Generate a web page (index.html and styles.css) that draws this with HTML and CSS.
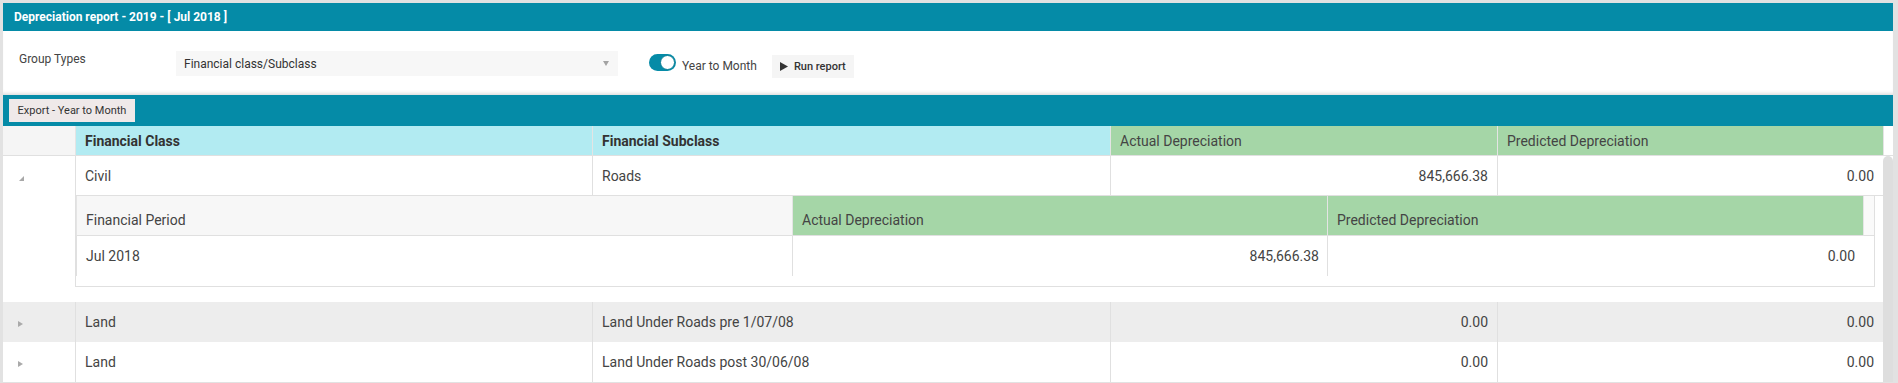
FILE: index.html
```html
<!DOCTYPE html>
<html lang="en">
<head>
    <meta charset="UTF-8">
    <meta name="viewport" content="width=device-width, initial-scale=1.0">
    <title>Depreciation report</title>
    <link rel="stylesheet" href="styles.css">
</head>
<body>

    <div class="panel">
        <div class="titlebar">Depreciation report - 2019 - [ Jul 2018 ]</div>

        <div class="filters">
            <div class="filter-label">Group Types</div>
            <div class="select">
                <span>Financial class/Subclass</span>
                <span class="caret"></span>
            </div>
            <span class="switch"></span>
            <span class="switch-label">Year to Month</span>
            <div class="run-btn">
                <svg width="8" height="9" viewBox="0 0 8 9"><path d="M0 0 L8 4.5 L0 9 Z" fill="#333"/></svg>
                <span>Run report</span>
            </div>
        </div>

        <div class="toolbar">
            <button class="export-btn">Export - Year to Month</button>
        </div>

        <div class="grid">
            <table class="grid-table">
                <colgroup>
                    <col class="col-exp">
                    <col class="col-class">
                    <col class="col-sub">
                    <col class="col-act">
                    <col class="col-pred">
                </colgroup>
                <thead>
                    <tr>
                        <th class="h-blank"></th>
                        <th class="h-cyan">Financial Class</th>
                        <th class="h-cyan">Financial Subclass</th>
                        <th class="h-green">Actual Depreciation</th>
                        <th class="h-green">Predicted Depreciation</th>
                    </tr>
                </thead>
                <tbody>
                    <tr class="expanded">
                        <td class="exp"><span class="arrow-down"></span></td>
                        <td>Civil</td>
                        <td>Roads</td>
                        <td class="num">845,666.38</td>
                        <td class="num">0.00</td>
                    </tr>
                    <tr class="detail">
                        <td class="exp"></td>
                        <td colspan="4" class="detail-cell">
                            <div class="inner">
                                <div class="inner-head">
                                    <table class="inner-table">
                                        <colgroup>
                                            <col class="icol-period">
                                            <col class="icol-act">
                                            <col class="icol-pred">
                                        </colgroup>
                                        <tr>
                                            <th class="ih-gray">Financial Period</th>
                                            <th class="ih-green">Actual Depreciation</th>
                                            <th class="ih-green">Predicted Depreciation</th>
                                        </tr>
                                    </table>
                                    <div class="inner-pad"></div>
                                </div>
                                <div class="inner-body">
                                    <table class="inner-table">
                                        <colgroup>
                                            <col class="icol-period">
                                            <col class="icol-act">
                                            <col class="icol-pred">
                                        </colgroup>
                                        <tr>
                                            <td>Jul 2018</td>
                                            <td class="num">845,666.38</td>
                                            <td class="num">0.00</td>
                                        </tr>
                                    </table>
                                </div>
                            </div>
                        </td>
                    </tr>
                    <tr class="alt">
                        <td class="exp"><span class="arrow-right"></span></td>
                        <td>Land</td>
                        <td>Land Under Roads pre 1/07/08</td>
                        <td class="num">0.00</td>
                        <td class="num">0.00</td>
                    </tr>
                    <tr>
                        <td class="exp"><span class="arrow-right"></span></td>
                        <td>Land</td>
                        <td>Land Under Roads post 30/06/08</td>
                        <td class="num">0.00</td>
                        <td class="num">0.00</td>
                    </tr>
                </tbody>
            </table>
            <div class="grid-side">
                <div class="head-pad"></div>
                <div class="scroll-thumb"></div>
            </div>
        </div>
    </div>

</body>
</html>
```

FILE: styles.css
```css
body {
    margin: 0;
    background-color: #e2e2e2;
    font-family: Roboto, "Noto Sans", Arial, sans-serif;
    color: #444;
    overflow: hidden;
}
.panel {
    margin: 3px 5px 0 3px;
    background: #fff;
}
.titlebar {
    height: 28px;
    line-height: 28px;
    background: #058ba7;
    color: #fff;
    font-size: 12px;
    font-weight: bold;
    padding-left: 11px;
}
.filters {
    height: 64px;
    box-sizing: border-box;
    display: flex;
    align-items: flex-start;
    padding: 20px 0 0 16px;
    font-size: 12px;
    box-shadow: inset 0 -4px 4px -3px rgba(0, 0, 0, 0.18);
}
.filter-label {
    width: 157px;
    margin-top: 1px;
    line-height: 14px;
}
.select {
    width: 442px;
    height: 25px;
    box-sizing: border-box;
    background: #f7f7f7;
    color: #333;
    display: flex;
    align-items: center;
    justify-content: space-between;
    padding: 0 9px 0 8px;
}
.caret {
    border-left: 3px solid transparent;
    border-right: 3px solid transparent;
    border-top: 5px solid #a3a3a3;
}
.switch {
    position: relative;
    width: 27px;
    height: 17px;
    border-radius: 9px;
    background: #058ba7;
    margin: 3px 6px 0 31px;
}
.switch::after {
    content: "";
    position: absolute;
    right: 1px;
    top: 1px;
    width: 15px;
    height: 15px;
    box-sizing: border-box;
    border-radius: 50%;
    background: #fff;
    border: 1px solid #0a7d95;
}
.switch-label {
    margin-top: 6px;
    line-height: 19px;
}
.run-btn {
    margin: 4px 0 0 15px;
    height: 23px;
    background: #f5f5f5;
    color: #333;
    font-size: 11px;
    font-weight: 500;
    display: flex;
    align-items: center;
    gap: 6px;
    padding: 0 8px;
}
.toolbar {
    height: 31px;
    box-sizing: border-box;
    background: #058ba7;
    padding: 4px 6px;
}
.export-btn {
    height: 23px;
    width: 126px;
    border: none;
    padding: 0;
    background: #efe9e9;
    color: #333;
    font-family: inherit;
    font-size: 11px;
}
.grid {
    display: flex;
}
.grid-table {
    width: 1880px;
    table-layout: fixed;
    border-collapse: separate;
    border-spacing: 0;
    font-size: 14px;
}
.col-exp { width: 72px; }
.col-class { width: 517px; }
.col-sub { width: 518px; }
.col-act { width: 387px; }
.col-pred { width: 386px; }
.grid-table th {
    height: 30px;
    box-sizing: border-box;
    text-align: left;
    padding: 0 9px;
    border-left: 1px solid #e4e4e4;
    border-bottom: 1px solid #e0e0e0;
    color: #333;
}
.grid-table th.h-blank {
    background: #f5f5f5;
    border-left: none;
}
.h-cyan {
    background: #b2ebf2;
    font-weight: bold;
}
.grid-table th.h-green {
    background: #a5d6a7;
    font-weight: normal;
    color: #444;
}
.grid-table td {
    height: 40px;
    box-sizing: border-box;
    padding: 0 9px;
    border-left: 1px solid #e0e0e0;
    white-space: nowrap;
}
.grid-table td.exp {
    border-left: none;
    padding-left: 15px;
}
.grid-table .num {
    text-align: right;
}
.expanded td {
    border-bottom: 1px solid #e0e0e0;
}
.expanded td.exp {
    border-bottom: none;
}
.alt td {
    background: #ededed;
}
.arrow-down {
    display: inline-block;
    border-left: 5px solid transparent;
    border-bottom: 5px solid #a8a8a8;
    margin-left: 1px;
}
.arrow-right {
    display: inline-block;
    border-top: 3px solid transparent;
    border-bottom: 3px solid transparent;
    border-left: 5px solid #aaa;
}
.grid-table td.detail-cell {
    height: auto;
    padding: 0 8px 15px 0;
    border-left: none;
}
.inner {
    border: 1px solid #e0e0e0;
    border-top: none;
}
.inner-head {
    display: flex;
}
.inner-table {
    width: 1787px;
    table-layout: fixed;
    border-collapse: separate;
    border-spacing: 0;
}
.icol-period { width: 716px; }
.icol-act { width: 535px; }
.icol-pred { width: 536px; }
.inner-table th {
    height: 40px;
    box-sizing: border-box;
    text-align: left;
    vertical-align: bottom;
    padding: 0 8px 7px 9px;
    font-weight: normal;
    color: #444;
    border-bottom: 1px solid #e0e0e0;
}
.ih-gray {
    background: #f7f7f7;
}
.inner-table th.ih-green {
    background: #a5d6a7;
    border-left: 1px solid #e4e4e4;
}
.inner-pad {
    width: 11px;
    border-left: 1px solid #e6e6e6;
    border-bottom: 1px solid #e0e0e0;
    box-sizing: border-box;
    background: #fafafa;
}
.inner-body {
    height: 50px;
}
.inner-table td {
    height: 40px;
    padding: 0 8px 0 9px;
}
.inner-table td.num {
    border-left: 1px solid #e0e0e0;
}
.grid-side {
    width: 10px;
    display: flex;
    flex-direction: column;
}
.head-pad {
    height: 30px;
    box-sizing: border-box;
    border-left: 1px solid #e4e4e4;
    border-bottom: 1px solid #e0e0e0;
    background: #fff;
}
.scroll-thumb {
    flex: 1;
    background: #dedede;
    border-radius: 5px 5px 0 0;
}
```
